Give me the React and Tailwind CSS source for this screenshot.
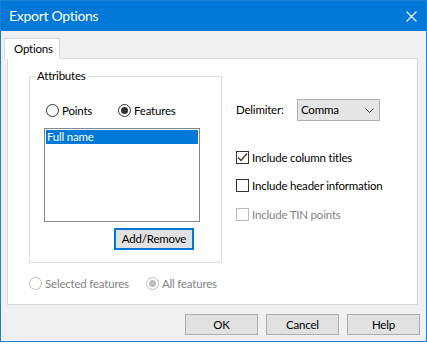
import React from 'react';

function Radio({ checked, disabled, label, className = '' }) {
  const ring = disabled ? 'border-[#bcbcbc]' : 'border-[#333333]';
  const dot = disabled ? 'bg-[#bcbcbc]' : 'bg-[#333333]';
  return (
    <div className={`flex h-[13px] items-center gap-[3px] ${className}`}>
      <span className={`flex h-[13px] w-[13px] shrink-0 items-center justify-center rounded-full border bg-white ${ring}`}>
        {checked && <span className={`h-[7px] w-[7px] rounded-full ${dot}`} />}
      </span>
      <span className={`whitespace-nowrap leading-none ${disabled ? 'text-[#838383]' : 'text-black'}`}>{label}</span>
    </div>
  );
}

function Checkbox({ checked, disabled, label, className = '' }) {
  return (
    <div className={`flex h-[13px] items-center gap-[3px] ${className}`}>
      <span className={`flex h-[13px] w-[13px] shrink-0 items-center justify-center border bg-white ${disabled ? 'border-[#bcbcbc]' : 'border-[#333333]'}`}>
        {checked && (
          <svg width="11" height="11" viewBox="0 0 11 11">
            <polyline points="1,5.5 4,8.5 10,1.5" fill="none" stroke="#333333" strokeWidth="1.2" />
          </svg>
        )}
      </span>
      <span className={`whitespace-nowrap leading-none ${disabled ? 'text-[#838383]' : 'text-black'}`}>{label}</span>
    </div>
  );
}

function DialogButton({ children }) {
  return (
    <button
      type="button"
      className="flex h-[21px] w-[73px] items-center justify-center border border-[#adadad] bg-[#e1e1e1] leading-none text-black"
    >
      {children}
    </button>
  );
}

export default function App() {
  return (
    <div className="h-[345px] w-[427px] bg-white font-['Lato',sans-serif] text-[11.5px] tracking-[-0.2px] text-black">
      <div className="flex h-[342px] flex-col border border-[#1a7fd6] bg-[#f0f0f0]">
        {/* title bar */}
        <div className="flex h-[30px] shrink-0 items-center justify-between bg-[#0078d7] pl-[8px] pr-[9px]">
          <span className="text-[14px] leading-none tracking-[-0.3px] text-white">Export Options</span>
          <svg width="11" height="11" viewBox="0 0 11 11">
            <path d="M0.5 0.5 L10.5 10.5 M10.5 0.5 L0.5 10.5" stroke="white" strokeWidth="1.1" />
          </svg>
        </div>

        <div className="flex flex-1 flex-col pl-[3px] pt-[7px]">
          {/* tab header */}
          <div className="relative z-10 -mb-px flex h-[21px] w-[56px] items-center border border-b-0 border-[#d9d9d9] bg-white pl-[9px]">
            Options
          </div>

          {/* tab panel */}
          <div className="ml-[3px] flex h-[247px] w-[411px] border border-[#d9d9d9] bg-white">
            <div className="ml-[21px] flex flex-col pt-[17px]">
              {/* Attributes group */}
              <div className="relative flex h-[187px] w-[193px] flex-col border border-[#dcdcdc]">
                <span className="absolute -top-[9px] left-[5px] bg-white px-[2px] leading-[16px]">Attributes</span>
                <div className="mt-[27px] flex pl-[16px]">
                  <Radio label="Points" className="w-[72px]" />
                  <Radio label="Features" checked />
                </div>
                <div className="ml-[14px] mt-[11px] h-[94px] w-[156px] border border-[#828790] bg-white p-[1px]">
                  <div className="h-[14px] bg-[#0078d7] pl-[1px] leading-[14px] text-white">Full name</div>
                </div>
                <button
                  type="button"
                  className="ml-[84px] mt-[6px] flex h-[22px] w-[80px] items-center justify-center border-2 border-[#0078d7] bg-[#e1e1e1] leading-none"
                >
                  Add/Remove
                </button>
              </div>
              <div className="mt-[14px] flex">
                <Radio label="Selected features" disabled className="w-[117px]" />
                <Radio label="All features" disabled checked />
              </div>
            </div>

            {/* right column */}
            <div className="ml-[14px] flex flex-col pt-[40px]">
              <div className="flex items-center">
                <span className="w-[61px] leading-none">Delimiter:</span>
                <div className="flex h-[22px] w-[83px] items-center justify-between border border-[#adadad] bg-[#e5e5e5] pl-[3px] pr-[5px]">
                  <span className="leading-none">Comma</span>
                  <svg width="9" height="5" viewBox="0 0 9 5">
                    <polyline points="0.5,0.5 4.5,4.5 8.5,0.5" fill="none" stroke="#333333" strokeWidth="1" />
                  </svg>
                </div>
              </div>
              <Checkbox label="Include column titles" checked className="mt-[30px]" />
              <Checkbox label="Include header information" className="mt-[15px]" />
              <Checkbox label="Include TIN points" disabled className="mt-[16px]" />
            </div>
          </div>

          {/* dialog buttons */}
          <div className="mt-[9px] flex justify-end gap-[8px] pr-[6px]">
            <DialogButton>OK</DialogButton>
            <DialogButton>Cancel</DialogButton>
            <DialogButton>Help</DialogButton>
          </div>
        </div>
      </div>
    </div>
  );
}
